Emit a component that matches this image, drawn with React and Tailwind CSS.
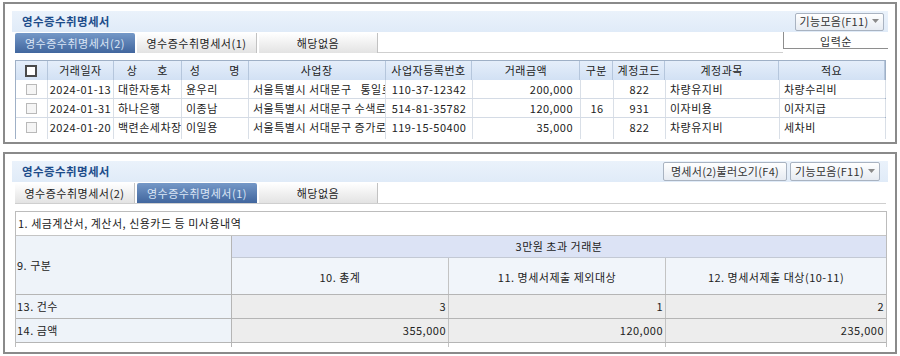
import React from "react";

const cols = [
  { k: "chk", w: "w-[32px]" },
  { k: "date", w: "w-[66px]", h: "거래일자", a: "justify-center" },
  { k: "name", w: "w-[68px]", h: "상호", a: "justify-start pl-[4px]" },
  { k: "person", w: "w-[67px]", h: "성명", a: "justify-start pl-[4px]" },
  { k: "addr", w: "w-[137px]", h: "사업장", a: "justify-start pl-[4px]" },
  { k: "biz", w: "w-[87px]", h: "사업자등록번호", a: "justify-center" },
  { k: "amt", w: "w-[108px]", h: "거래금액", a: "justify-end pr-[7px]" },
  { k: "gb", w: "w-[33px]", h: "구분", a: "justify-center" },
  { k: "code", w: "w-[52px]", h: "계정코드", a: "justify-center" },
  { k: "acct", w: "w-[114px]", h: "계정과목", a: "justify-start pl-[4px]" },
  { k: "memo", w: "w-[106px]", h: "적요", a: "justify-start pl-[4px]" },
];

const rows = [
  { date: "2024-01-13", name: "대한자동차", person: "윤우리", addr: "서울특별시 서대문구   통일로", biz: "110-37-12342", amt: "200,000", gb: "", code: "822", acct: "차량유지비", memo: "차량수리비" },
  { date: "2024-01-31", name: "하나은행", person: "이종남", addr: "서울특별시 서대문구 수색로", biz: "514-81-35782", amt: "120,000", gb: "16", code: "931", acct: "이자비용", memo: "이자지급" },
  { date: "2024-01-20", name: "백련손세차장", person: "이일용", addr: "서울특별시 서대문구 증가로", biz: "119-15-50400", amt: "35,000", gb: "", code: "822", acct: "차량유지비", memo: "세차비" },
];

function Arrow() {
  return (
    <svg width="7" height="5" viewBox="0 0 7 5" className="ml-[4px] shrink-0">
      <polygon points="0,0 7,0 3.5,4" fill="#8a8a8a" />
    </svg>
  );
}

function Btn({ children, arrow, className }) {
  return (
    <div className={"flex items-center whitespace-nowrap rounded-[2px] border border-[#a9b3c1] bg-linear-to-b from-white to-[#e6ebf2] px-[4px] text-[11px] leading-none tracking-[0.3px] text-[#333] " + className}>
      <span>{children}</span>
      {arrow && <Arrow />}
    </div>
  );
}

function Tab({ active, className, children }) {
  if (active) {
    return (
      <div className={"flex h-[20px] items-center justify-center rounded-t-[2px] bg-linear-to-b from-[#7598c7] to-[#41669e] text-[#dbe6f6] " + className}>
        {children}
      </div>
    );
  }
  return (
    <div className={"flex h-[20px] items-center justify-center border-r border-[#c2c2c2] bg-linear-to-b from-white to-[#e3e3e3] text-[#222] " + className}>
      {children}
    </div>
  );
}

function HeaderBar({ children }) {
  return (
    <div className="flex h-[21px] items-center justify-between bg-linear-to-b from-[#eaf2fb] to-[#e0ebf8] pl-[10px]">
      <span className="text-[11.5px] font-bold leading-none tracking-[0.4px] text-[#1d4c8a]">영수증수취명세서</span>
      {children}
    </div>
  );
}

function HeadCell({ c }) {
  if (c.k === "chk") {
    return (
      <div className={c.w + " flex h-[19px] items-center justify-center border-r border-[#b5c6dc]"}>
        <div className="h-[12px] w-[12px] border-2 border-[#4a4a4a] bg-white" />
      </div>
    );
  }
  let label = c.h;
  if (c.k === "name") {
    label = (
      <span className="flex gap-[20px]">
        <span>상</span>
        <span>호</span>
      </span>
    );
  } else if (c.k === "person") {
    label = (
      <span className="flex gap-[29px]">
        <span>성</span>
        <span>명</span>
      </span>
    );
  }
  return (
    <div className={c.w + " flex h-[19px] items-center justify-center border-r border-[#b5c6dc] text-[#222]"}>
      {label}
    </div>
  );
}

function BodyRow({ r, last }) {
  return (
    <div className={"flex h-[19px] " + (last ? "" : "border-b border-[#d4dbe5]")}>
      {cols.map((c, i) => {
        if (c.k === "chk") {
          return (
            <div key={i} className={c.w + " flex shrink-0 items-center justify-center border-r border-[#d9dfe7]"}>
              <div className="h-[11px] w-[11px] border border-[#b9b9b9] bg-[#f5f5f5]" />
            </div>
          );
        }
        return (
          <div key={i} className={c.w + " flex shrink-0 items-center overflow-hidden whitespace-pre border-r border-[#d9dfe7] " + c.a}>
            {r[c.k]}
          </div>
        );
      })}
    </div>
  );
}

export default function App() {
  return (
    <div className="h-[356px] w-[900px] overflow-hidden bg-white pl-[3px] pt-[2px] font-['Noto_Sans_CJK_KR','Noto_Sans',sans-serif] text-[11px] leading-none tracking-[0.5px] text-[#222]">
      {/* Panel 1 */}
      <div className="h-[142px] w-[894px] border-2 border-[#8a8a8a] px-[7px] pt-[7px]">
        <HeaderBar>
          <Btn arrow className="mr-[4px] h-[18px] w-[89px] justify-center">기능모음(F11)</Btn>
        </HeaderBar>
        <div className="ml-[3px] flex h-[21px] items-start">
          <Tab active className="mt-[1px] w-[120px]">영수증수취명세서(2)</Tab>
          <Tab className="ml-[2px] mt-[1px] w-[120px]">영수증수취명세서(1)</Tab>
          <Tab className="ml-[2px] mt-[1px] w-[119px]">해당없음</Tab>
          <div className="h-[21px] flex-1 border-b border-[#cfcfcf]" />
          <div className="flex h-[17px] w-[105px] items-center justify-center border-b border-l border-[#8e8e8e] pt-[2px] text-[#333]">
            입력순
          </div>
        </div>
        <div className="ml-[3px] mt-[7px] w-[871px] border-l border-r border-t border-[#9fb0c6]">
          <div className="flex bg-linear-to-b from-[#e5eefa] to-[#d2e1f4]">
            {cols.map((c, i) => (
              <HeadCell key={i} c={c} />
            ))}
          </div>
          {rows.map((r, i) => (
            <BodyRow key={i} r={r} last={i === rows.length - 1} />
          ))}
          <div className="flex h-[2px]">
            {cols.map((c, i) => (
              <div key={i} className={c.w + " shrink-0 border-r border-[#d9dfe7]"} />
            ))}
          </div>
        </div>
      </div>

      {/* Panel 2 */}
      <div className="mt-[8px] h-[202px] w-[894px] border-2 border-[#8a8a8a] px-[7px] pt-[7px]">
        <HeaderBar>
          <div className="mr-[8px] flex gap-[3px]">
            <Btn className="h-[19px] w-[124px] justify-center">명세서(2)불러오기(F4)</Btn>
            <Btn arrow className="h-[19px] w-[90px] justify-center">기능모음(F11)</Btn>
          </div>
        </HeaderBar>
        <div className="ml-[3px] mr-[2px] flex h-[22px] items-start border-b border-[#cfcfcf]">
          <Tab className="mt-[1px] w-[120px]">영수증수취명세서(2)</Tab>
          <Tab active className="ml-[2px] mt-[1px] w-[120px]">영수증수취명세서(1)</Tab>
          <Tab className="ml-[2px] mt-[1px] w-[119px]">해당없음</Tab>
        </div>
        <div className="ml-[3px] mt-[7px] w-[872px] border-l border-r border-t border-[#bcbcbc]">
          <div className="flex h-[24px] items-center border-b border-[#c4c4c4] bg-white pl-[2px] text-[#222]">
            1. 세금계산서, 계산서, 신용카드 등 미사용내역
          </div>
          <div className="flex h-[59px] border-b border-[#b5b5b5]">
            <div className="flex w-[216px] shrink-0 items-center border-r border-[#b5b5b5] bg-[#eef3f9] pl-[1px]">
              9. 구분
            </div>
            <div className="flex flex-1 flex-col">
              <div className="flex h-[22px] items-center justify-center border-b border-[#c3c9d4] bg-[#dce3f5] text-[#222]">
                3만원 초과 거래분
              </div>
              <div className="flex flex-1 bg-[#f1f5fa]">
                <div className="flex w-[217px] items-center justify-center border-r border-[#c3c3c3] pt-[2px]">10. 총계</div>
                <div className="flex w-[217px] items-center justify-center border-r border-[#c3c3c3] pt-[2px]">11. 명세서제출 제외대상</div>
                <div className="flex flex-1 items-center justify-center pt-[2px]">12. 명세서제출 대상(10-11)</div>
              </div>
            </div>
          </div>
          {[
            ["13. 건수", "3", "1", "2"],
            ["14. 금액", "355,000", "120,000", "235,000"],
          ].map((r, i) => (
            <div key={i} className="flex h-[24px] border-b border-[#b5b5b5]">
              <div className="flex w-[216px] shrink-0 items-center border-r border-[#b5b5b5] bg-[#eef3f9] pl-[1px]">{r[0]}</div>
              <div className="flex w-[217px] shrink-0 items-center justify-end border-r border-[#c3c3c3] bg-[#ededed] pr-[2px]">{r[1]}</div>
              <div className="flex w-[217px] shrink-0 items-center justify-end border-r border-[#c3c3c3] bg-[#ededed] pr-[2px]">{r[2]}</div>
              <div className="flex flex-1 items-center justify-end bg-[#ededed] pr-[2px]">{r[3]}</div>
            </div>
          ))}
          <div className="flex h-[4px]">
            <div className="w-[216px] shrink-0 border-r border-[#b5b5b5]" />
            <div className="w-[217px] shrink-0 border-r border-[#c3c3c3]" />
            <div className="w-[217px] shrink-0 border-r border-[#c3c3c3]" />
          </div>
        </div>
      </div>
    </div>
  );
}
